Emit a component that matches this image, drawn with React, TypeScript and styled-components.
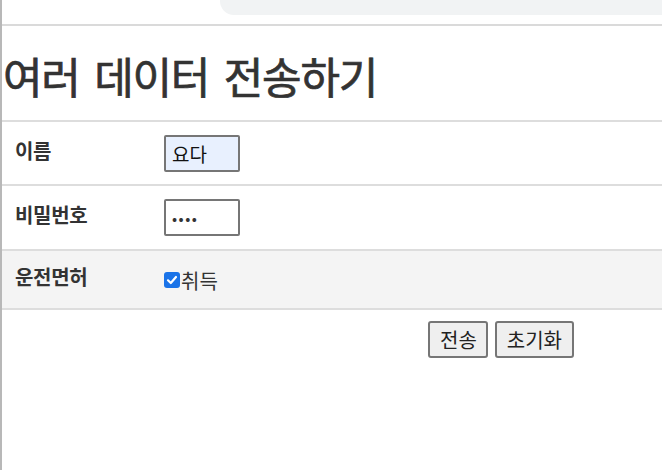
import React from "react";
import styled, { createGlobalStyle } from "styled-components";

const GlobalStyle = createGlobalStyle`
  html, body {
    margin: 0;
    padding: 0;
    background: #ffffff;
    overflow: hidden;
  }
  body {
    font-family: "Noto Sans CJK KR", "Noto Sans", sans-serif;
    color: #333333;
  }
`;

const Window = styled.div`
  width: 660px;
  height: 470px;
  border-left: 2px solid #b8b8b8;
  overflow: hidden;
`;

const Chrome = styled.div`
  height: 24px;
  border-bottom: 2px solid #dadada;
  display: flex;
  justify-content: flex-end;
  align-items: flex-start;
`;

const UrlBar = styled.div`
  width: 442px;
  height: 15px;
  background: #f1f3f4;
  border-bottom-left-radius: 14px;
`;

const Content = styled.div`
  width: 998px;
`;

const Title = styled.h1`
  margin: 0;
  padding: 24px 0 0 1px;
  height: 70px;
  font-size: 43px;
  font-weight: 400;
  line-height: 1.2;
  letter-spacing: -1.2px;
  word-spacing: 6px;
  color: #333333;
  -webkit-text-stroke: 0.7px #333333;
`;

const Table = styled.div`
  display: flex;
  flex-direction: column;
`;

const Row = styled.div<{ $height: number; $shade?: boolean; $last?: boolean }>`
  display: grid;
  grid-template-columns: 162px 1fr;
  align-items: center;
  height: ${(p) => p.$height}px;
  border-top: 2px solid #dddddd;
  border-bottom: ${(p) => (p.$last ? "2px solid #dddddd" : "none")};
  background: ${(p) => (p.$shade ? "#f4f4f4" : "#ffffff")};
`;

const Label = styled.div`
  padding-left: 13px;
  margin-top: -6px;
  font-size: 20px;
  font-weight: 700;
  letter-spacing: -0.3px;
  color: #333333;
`;

const Field = styled.input<{ $filled?: boolean; $secret?: boolean }>`
  box-sizing: border-box;
  width: 76px;
  height: 37px;
  margin: 0;
  padding: 0 6px;
  border: 2px solid #767676;
  border-radius: 2px;
  background: ${(p) => (p.$filled ? "#e8f0fe" : "#ffffff")};
  font-family: "Noto Sans CJK KR", sans-serif;
  font-size: ${(p) => (p.$secret ? "15px" : "19px")};
  letter-spacing: ${(p) => (p.$secret ? "1.5px" : "0")};
  color: ${(p) => (p.$secret ? "#333333" : "#111111")};
  outline: none;
`;

const CheckLabel = styled.label`
  display: flex;
  align-items: center;
  font-size: 20px;
  color: #333333;
  margin-top: 1px;
`;

const Box = styled.span`
  width: 16px;
  height: 16px;
  border-radius: 3px;
  background: #1a73e8;
  display: inline-flex;
  align-items: center;
  justify-content: center;
  margin-right: 1px;
`;

const Actions = styled.div`
  display: flex;
  justify-content: center;
  gap: 7px;
  padding-top: 11px;
`;

const Button = styled.button`
  box-sizing: border-box;
  height: 37px;
  padding: 0 9.5px;
  border: 2px solid #767676;
  border-radius: 3px;
  background: #efefef;
  font-family: "Noto Sans CJK KR", sans-serif;
  font-size: 20px;
  color: #222222;
`;

export default function App() {
  return (
    <>
      <GlobalStyle />
      <Window>
        <Chrome>
          <UrlBar />
        </Chrome>
        <Content>
          <Title>여러 데이터 전송하기</Title>
          <Table>
            <Row $height={62}>
              <Label>이름</Label>
              <div>
                <Field $filled defaultValue="요다" />
              </div>
            </Row>
            <Row $height={63}>
              <Label>비밀번호</Label>
              <div>
                <Field $secret type="password" defaultValue="1234" />
              </div>
            </Row>
            <Row $height={57} $shade $last>
              <Label>운전면허</Label>
              <CheckLabel>
                <Box>
                  <svg width="12" height="12" viewBox="0 0 12 12">
                    <path
                      d="M2 6.3 L4.8 9 L10 3"
                      fill="none"
                      stroke="#ffffff"
                      strokeWidth="2.2"
                      strokeLinecap="round"
                      strokeLinejoin="round"
                    />
                  </svg>
                </Box>
                취득
              </CheckLabel>
            </Row>
          </Table>
          <Actions>
            <Button>전송</Button>
            <Button>초기화</Button>
          </Actions>
        </Content>
      </Window>
    </>
  );
}
